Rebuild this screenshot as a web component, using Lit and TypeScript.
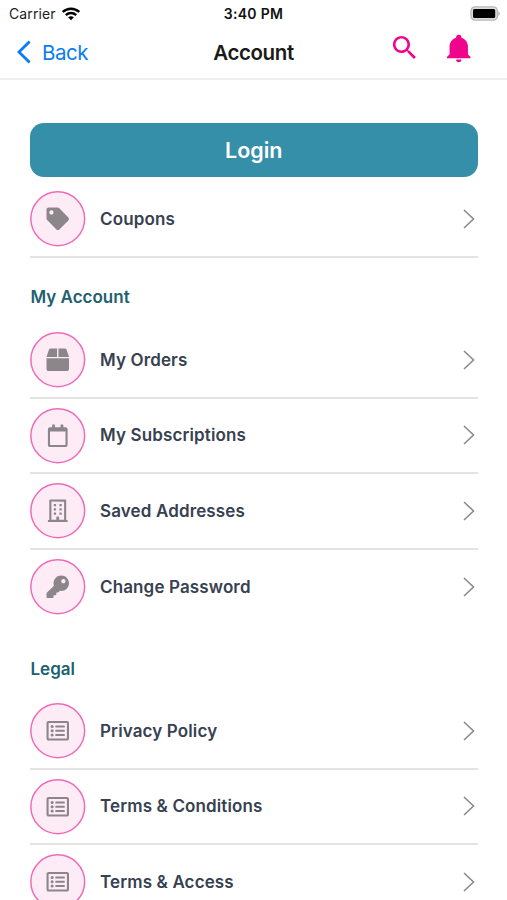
import { LitElement, html, css, svg } from "lit";
import { customElement, property } from "lit/decorators.js";

interface Glyph {
  box: string;
  width: number;
  d: string;
}

const pane = (x: number, y: number) =>
  `M${x + 5} ${y + 17}a12 12 0 0 1 12-12h30a12 12 0 0 1 12 12v30a12 12 0 0 1-12 12h-30a12 12 0 0 1-12-12z`;
const bullet = (y: number) => `M92 ${y}a36 36 0 1 0 72 0a36 36 0 1 0-72 0z`;
const bar = (y: number) =>
  `M200 ${y - 12}a12 12 0 0 1 12-12h192a12 12 0 0 1 12 12v24a12 12 0 0 1-12 12h-192a12 12 0 0 1-12-12z`;

const glyphs: Record<string, Glyph> = {
  tag: {
    box: "0 0 512 512",
    width: 22.5,
    d: "M0 252.118V48C0 21.49 21.49 0 48 0h204.118a48 48 0 0 1 33.941 14.059l211.882 211.882c18.745 18.745 18.745 49.137 0 67.882L293.823 497.941c-18.745 18.745-49.137 18.745-67.882 0L14.059 286.059A48 48 0 0 1 0 252.118zM112 64c-26.51 0-48 21.49-48 48s21.49 48 48 48 48-21.49 48-48-21.49-48-48-48z",
  },
  box: {
    box: "0 0 512 512",
    width: 22.5,
    d: "M509.5 184.6L458.9 32.8C452.4 13.2 434.1 0 413.4 0H272v192h238.7c-.4-2.5-.4-5-1.2-7.4zM240 0H98.6c-20.7 0-39 13.2-45.5 32.8L2.5 184.6c-.8 2.4-.8 4.9-1.2 7.4H240V0zM0 224v240c0 26.5 21.5 48 48 48h416c26.5 0 48-21.5 48-48V224H0z",
  },
  calendar: {
    box: "0 0 448 512",
    width: 19.7,
    d: "M400 64h-48V12c0-6.6-5.4-12-12-12h-40c-6.6 0-12 5.4-12 12v52H160V12c0-6.6-5.4-12-12-12h-40c-6.6 0-12 5.4-12 12v52H48C21.5 64 0 85.5 0 112v352c0 26.5 21.5 48 48 48h352c26.5 0 48-21.5 48-48V112c0-26.5-21.5-48-48-48zm-6 400H54c-3.3 0-6-2.7-6-6V160h352v298c0 3.3-2.7 6-6 6z",
  },
  building: {
    box: "0 0 448 512",
    width: 19.7,
    d:
      [96, 192, 288].map((y) => pane(128, y) + pane(256, y)).join("") +
      "M448 476v36H0v-36c0-6.6 5.4-12 12-12h19.5V24c0-13.3 10.7-24 24-24h337c13.3 0 24 10.7 24 24v440H436c6.6 0 12 5.4 12 12zM79.5 463H192v-67c0-6.6 5.4-12 12-12h40c6.6 0 12 5.4 12 12v67h112.5V49L80 48z",
  },
  key: {
    box: "0 0 512 512",
    width: 22.5,
    d: "M512 176.001C512 273.203 433.202 352 336 352c-11.22 0-22.19-1.062-32.827-3.069l-24.012 27.014A23.999 23.999 0 0 1 261.223 384H224v40c0 13.255-10.745 24-24 24h-40v40c0 13.255-10.745 24-24 24H24c-13.255 0-24-10.745-24-24v-78.059c0-6.365 2.529-12.47 7.029-16.971l161.802-161.802C163.108 213.814 160 195.271 160 176 160 78.798 238.797.001 335.999 0 433.488-.001 512 78.511 512 176.001zM336 128c0 26.51 21.49 48 48 48s48-21.49 48-48-21.49-48-48-48-48 21.49-48 48z",
  },
  list: {
    box: "0 0 512 512",
    width: 22.5,
    d:
      "M464 32H48C21.49 32 0 53.49 0 80v352c0 26.51 21.49 48 48 48h416c26.51 0 48-21.49 48-48V80c0-26.51-21.49-48-48-48zm-6 400H54a6 6 0 0 1-6-6V86a6 6 0 0 1 6-6h404a6 6 0 0 1 6 6v340a6 6 0 0 1-6 6z" +
      [160, 256, 352].map((y) => bullet(y) + bar(y)).join(""),
  },
};

@customElement("menu-row")
class MenuRow extends LitElement {
  @property() icon = "tag";
  @property() label = "";

  static styles = css`
    :host {
      display: flex;
      align-items: center;
      box-sizing: border-box;
      height: 75.75px;
      border-bottom: 2px solid #e3e3e3;
    }
    :host([last]) {
      border-bottom-color: transparent;
    }
    .badge {
      display: flex;
      align-items: center;
      justify-content: center;
      flex: none;
      width: 55.5px;
      height: 55.5px;
    }
    .badge svg {
      overflow: visible;
    }
    .disc {
      fill: #fdecf6;
      stroke: #ef6bb8;
      stroke-width: 1.5;
    }
    .glyph {
      fill: #8c858a;
    }
    .label {
      flex: 1;
      margin-left: 14.5px;
      font-size: 17px;
      font-weight: 600;
      line-height: 22px;
      letter-spacing: 0.13px;
      color: #374151;
      white-space: nowrap;
    }
    .chevron {
      flex: none;
      margin-right: 3px;
      fill: none;
      stroke: #8a8a8e;
      stroke-width: 1.6;
    }
  `;

  render() {
    const g = glyphs[this.icon];
    const h = 22.5;
    return html`
      <div class="badge">
        <svg width="55.5" height="55.5" viewBox="0 0 55.5 55.5">
          <circle class="disc" cx="27.75" cy="27.75" r="26.9" />
          ${svg`<svg x=${(55.5 - g.width) / 2} y=${(55.5 - h) / 2} width=${g.width} height=${h} viewBox=${g.box}>
            <path class="glyph" d=${g.d} />
          </svg>`}
        </svg>
      </div>
      <span class="label">${this.label}</span>
      <svg class="chevron" width="12" height="20" viewBox="0 0 12 20">
        <path d="M1 1L10.5 10L1 19" />
      </svg>
    `;
  }
}

@customElement("app-root")
class AppRoot extends LitElement {
  static styles = css`
    :host {
      display: block;
      height: 900px;
      overflow: hidden;
      background: #fff;
      font-family: Inter, "Liberation Sans", sans-serif;
    }
    svg {
      display: block;
    }
    .status {
      display: grid;
      grid-template-columns: minmax(0, 1fr) auto minmax(0, 1fr);
      align-items: center;
      height: 27px;
      font-size: 14px;
      color: #111;
    }
    .carrier {
      display: flex;
      align-items: center;
      gap: 6px;
      padding-left: 9px;
      letter-spacing: 0.1px;
      color: #222;
    }
    .time {
      font-weight: 600;
      letter-spacing: 0.3px;
    }
    .battery {
      justify-self: end;
      margin-right: 7px;
    }
    .nav {
      display: grid;
      grid-template-columns: minmax(0, 1fr) auto minmax(0, 1fr);
      align-items: center;
      box-sizing: border-box;
      height: 53px;
      padding-bottom: 1px;
      border-bottom: 2px solid #efefef;
    }
    .back {
      display: flex;
      align-items: center;
      gap: 11px;
      padding-left: 17px;
      font-size: 20.5px;
      letter-spacing: -0.5px;
      color: #0a7cf5;
    }
    .title {
      font-size: 20.5px;
      font-weight: 600;
      letter-spacing: -0.4px;
      color: #1a1a1a;
    }
    .actions {
      justify-self: end;
      display: flex;
      gap: 22.5px;
      margin: -8px 32.5px 0 0;
      fill: #f0048c;
    }
    .content {
      padding: 43px 29.5px 0 30px;
    }
    .login {
      display: flex;
      align-items: center;
      justify-content: center;
      width: 100%;
      height: 54px;
      margin-bottom: 5px;
      border: 0;
      border-radius: 14px;
      background: #358fa9;
      color: #fff;
      font: 600 21.5px/26px Inter, sans-serif;
    }
    .heading {
      margin: 0;
      padding: 28.5px 0 0 0.5px;
      box-sizing: border-box;
      height: 65.1px;
      font-size: 17px;
      font-weight: 600;
      line-height: 22px;
      color: #20606f;
    }
    .heading.spaced {
      padding-top: 32px;
      height: 68px;
    }
  `;

  render() {
    return html`
      <div class="status">
        <div class="carrier">
          <span>Carrier</span>
          <svg width="18" height="14" viewBox="0 0 18 14">
            <g fill="none" stroke="#000" stroke-width="2.4">
              <path d="M.8 5C5.4.6 12.6.6 17.2 5" />
              <path d="M3.8 8.1C6.8 5.3 11.2 5.3 14.2 8.1" />
            </g>
            <path d="M6.1 10.3C7.8 8.8 10.2 8.8 11.9 10.3L9 13.3Z" />
          </svg>
        </div>
        <span class="time">3:40 PM</span>
        <svg class="battery" width="30" height="15" viewBox="0 0 30 15">
          <rect x="1" y=".9" width="26.4" height="13.2" rx="4" fill="#dcdcdc" stroke="#b8b8b8" stroke-width="1.3" />
          <rect x="3" y="3" width="22.2" height="9" rx="1.6" />
          <path d="M28.3 5.2C30.3 6 30.3 9 28.3 9.8Z" fill="#b3b3b3" />
        </svg>
      </div>

      <div class="nav">
        <div class="back">
          <svg width="14" height="24" viewBox="0 0 14 24">
            <path d="M12.6 1.5L2 12L12.6 22.5" fill="none" stroke="#0a7cf5" stroke-width="2.8" />
          </svg>
          <span>Back</span>
        </div>
        <span class="title">Account</span>
        <div class="actions">
          <svg width="31.5" height="31.5" viewBox="0 0 24 24">
            <path d="M15.5 14h-.79l-.28-.27C15.41 12.59 16 11.11 16 9.5 16 5.91 13.09 3 9.5 3S3 5.91 3 9.5 5.91 16 9.5 16c1.61 0 3.09-.59 4.23-1.57l.27.28v.79l5 4.99L20.49 19l-4.99-5zm-6 0C7.01 14 5 11.99 5 9.5S7.01 5 9.5 5 14 7.01 14 9.5 11.99 14 9.5 14z" />
          </svg>
          <svg width="31.5" height="31.5" viewBox="0 0 24 24">
            <path d="M21,19V20H3V19L5,17V11C5,7.9 7.03,5.17 10,4.29C10,4.19 10,4.1 10,4A2,2 0 0,1 12,2A2,2 0 0,1 14,4C14,4.1 14,4.19 14,4.29C16.97,5.17 19,7.9 19,11V17L21,19M14,21A2,2 0 0,1 12,23A2,2 0 0,1 10,21" />
          </svg>
        </div>
      </div>

      <div class="content">
        <button class="login">Login</button>
        <menu-row icon="tag" label="Coupons"></menu-row>

        <h2 class="heading">My Account</h2>
        <menu-row icon="box" label="My Orders"></menu-row>
        <menu-row icon="calendar" label="My Subscriptions"></menu-row>
        <menu-row icon="building" label="Saved Addresses"></menu-row>
        <menu-row icon="key" label="Change Password" last></menu-row>

        <h2 class="heading spaced">Legal</h2>
        <menu-row icon="list" label="Privacy Policy"></menu-row>
        <menu-row icon="list" label="Terms &amp; Conditions"></menu-row>
        <menu-row icon="list" label="Terms &amp; Access"></menu-row>
      </div>
    `;
  }
}
